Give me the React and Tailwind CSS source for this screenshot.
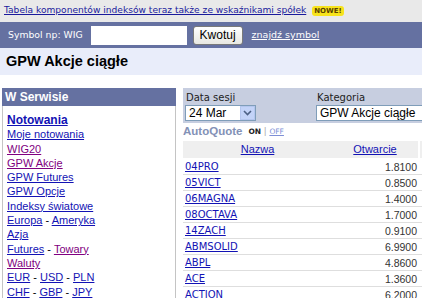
import React from 'react';

const sideLinks = [
  [{ t: 'Notowania', bold: true }],
  [{ t: 'Moje notowania' }],
  [{ t: 'WIG20', visited: true }],
  [{ t: 'GPW Akcje', visited: true }],
  [{ t: 'GPW Futures' }],
  [{ t: 'GPW Opcje' }],
  [{ t: 'Indeksy światowe' }],
  [{ t: 'Europa' }, { t: 'Ameryka' }],
  [{ t: 'Azja' }],
  [{ t: 'Futures' }, { t: 'Towary', visited: true }],
  [{ t: 'Waluty', visited: true }],
  [{ t: 'EUR' }, { t: 'USD' }, { t: 'PLN' }],
  [{ t: 'CHF' }, { t: 'GBP' }, { t: 'JPY' }],
];

const quotes = [
  ['04PRO', '1.8100'],
  ['05VICT', '0.8500'],
  ['06MAGNA', '1.4000'],
  ['08OCTAVA', '1.7000'],
  ['14ZACH', '0.9100'],
  ['ABMSOLID', '6.9900'],
  ['ABPL', '4.8600'],
  ['ACE', '1.3600'],
  ['ACTION', '6.2000'],
];

const App = () => {
  return (
    <div className="w-[422px] h-[298px] overflow-hidden bg-white font-['Liberation_Sans',Arial,sans-serif]">
      {/* top notice */}
      <div className="h-[22px] bg-[#e9e9e9] flex items-center pl-[4px]">
        <a className="font-['DejaVu_Sans',Verdana,sans-serif] text-[9.1px] text-[#1a1a9c] underline">
          Tabela komponentów indeksów teraz także ze wskaźnikami spółek
        </a>
        <span className="ml-[6px] bg-[#f7e31c] text-[#5a4200] font-['DejaVu_Sans',sans-serif] font-bold text-[7px] leading-[10px] px-[2px] rounded-[3px]">
          NOWE!
        </span>
      </div>

      {/* quote search */}
      <div className="h-[26px] bg-[#6571a1] flex items-center pl-[8px]">
        <span className="font-['DejaVu_Sans',Verdana,sans-serif] text-[9.3px] text-white">Symbol np: WIG</span>
        <input className="ml-[8px] w-[96px] h-[19px] bg-white outline-none" />
        <button className="ml-[6px] w-[50px] h-[19px] rounded-[3px] border border-[#7a7a7a] bg-gradient-to-b from-white to-[#e8e8e2] text-[12px] text-black leading-none">
          Kwotuj
        </button>
        <a className="ml-[9px] font-['DejaVu_Sans',Verdana,sans-serif] text-[9.5px] text-white underline">znajdź symbol</a>
      </div>

      {/* page title */}
      <div className="h-[27px] bg-[#e9edfa] flex items-center pl-[6px]">
        <h1 className="text-[14.5px] font-bold text-black">GPW Akcje ciągłe</h1>
      </div>

      <div className="flex mt-[13px]">
        {/* sidebar */}
        <div className="w-[174px] ml-[2px] shrink-0">
          <div className="h-[18px] bg-[#6571a1] text-white font-bold text-[12px] flex items-center pl-[3px]">W Serwisie</div>
          <div className="border border-t-0 border-[#c4c4c4] pt-[7px] pl-[4px] pb-[4px] text-[11px] leading-[14.3px]">
            {sideLinks.map((line, i) => (
              <div key={i} className="whitespace-nowrap">
                {line.map((l, j) => (
                  <React.Fragment key={j}>
                    {j > 0 && <span className="text-black"> - </span>}
                    <a className={`underline ${l.visited ? 'text-[#800080]' : 'text-[#1212b4]'} ${l.bold ? 'font-bold text-[12px]' : ''}`}>{l.t}</a>
                  </React.Fragment>
                ))}
              </div>
            ))}
          </div>
        </div>

        {/* quotes */}
        <div className="ml-[7px] flex-1 min-w-0">
          <div className="h-[35px] bg-[#c7cee0] flex pl-[2px] pt-[3px]">
            <div className="w-[131px] shrink-0">
              <div className="font-['DejaVu_Sans',Tahoma,sans-serif] text-[10px] text-[#222] leading-[13px] pl-[1px]">Data sesji</div>
              <div className="mt-[1px] w-[71px] h-[16px] bg-white border border-[#7f9db9] flex items-center">
                <span className="flex-1 pl-[3px] text-[12px] leading-none text-black">24 Mar</span>
                <span className="w-[15px] h-[14px] bg-[#c3d3f8] border border-[#b4c6ee] flex items-center justify-center">
                  <svg width="9" height="6" viewBox="0 0 9 6">
                    <path d="M1 1 L4.5 4.5 L8 1" stroke="#4d6185" strokeWidth="1.6" fill="none" />
                  </svg>
                </span>
              </div>
            </div>
            <div className="flex-1 min-w-0">
              <div className="font-['DejaVu_Sans',Tahoma,sans-serif] text-[10px] text-[#222] leading-[13px] pl-[1px]">Kategoria</div>
              <div className="mt-[1px] w-[160px] h-[16px] bg-white border border-[#7f9db9] flex items-center pl-[3px] text-[12px] leading-none text-black whitespace-nowrap">
                GPW Akcje ciągłe
              </div>
            </div>
          </div>

          <div className="h-[18px] flex items-center">
            <span className="text-[11.5px] font-bold text-[#8391b6]">AutoQuote</span>
            <span className="ml-[6px] font-['DejaVu_Sans',Verdana,sans-serif] text-[7.5px] font-bold text-[#222]">ON</span>
            <span className="ml-[3px] text-[9px] text-[#aaa]">|</span>
            <a className="ml-[3px] font-['DejaVu_Sans',Verdana,sans-serif] text-[7.5px] text-[#7d8fd6] underline">OFF</a>
          </div>

          <table className="w-[260px] border-collapse">
            <thead>
              <tr className="h-[17px] bg-[#efefef]">
                <th className="w-[149px] p-0 font-normal text-[11px] text-center">
                  <a className="text-[#1212b4] underline">Nazwa</a>
                </th>
                <th className="w-[87px] p-0 font-normal text-[11px] text-center border-r-2 border-white">
                  <a className="text-[#1212b4] underline">Otwarcie</a>
                </th>
                <th className="p-0"></th>
              </tr>
            </thead>
            <tbody>
              {quotes.map(([name, open]) => (
                <tr key={name} className="h-[16px] border-b border-[#dedede]">
                  <td className="p-0 pl-[2px] pt-[2px] font-['DejaVu_Sans',Verdana,sans-serif] text-[10px] leading-none">
                    <a className="text-[#1212b4] underline">{name}</a>
                  </td>
                  <td className="p-0 pr-[2px] pt-[2px] text-right text-[10.5px] text-[#333] leading-none">{open}</td>
                  <td className="p-0"></td>
                </tr>
              ))}
            </tbody>
          </table>
        </div>
      </div>
    </div>
  );
};

export default App;
